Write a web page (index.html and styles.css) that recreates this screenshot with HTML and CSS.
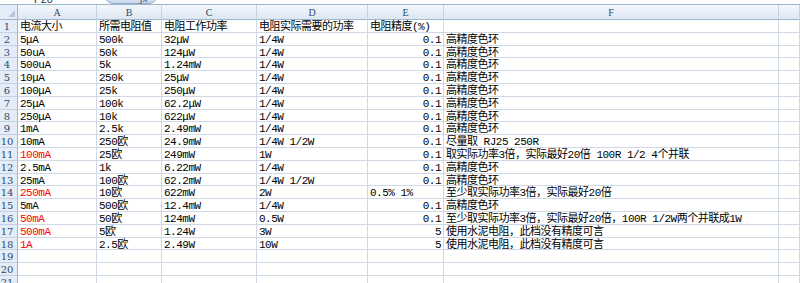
FILE: index.html
```html
<!DOCTYPE html>
<html>
<head>
    <title>电阻选择表</title>
    <link rel="stylesheet" href="styles.css">
</head>
<body>
    <div class="formula">
        <span class="namebox">F20</span>
        <span class="fxbtn">fx</span>
    </div>
    <div class="sheet">
        <div class="row head">
            <div class="corner"><i></i></div>
            <div>A</div><div>B</div><div>C</div><div>D</div><div>E</div><div>F</div><div></div>
        </div>
        <div class="row">
            <div class="num">1</div>
            <div>电流大小</div><div>所需电阻值</div><div>电阻工作功率</div><div>电阻实际需要的功率</div><div>电阻精度(%)</div><div></div><div></div>
        </div>
        <div class="row">
            <div class="num">2</div>
            <div>5μA</div><div>500k</div><div>32μW</div><div>1/4W</div><div class="r">0.1</div><div>高精度色环</div><div></div>
        </div>
        <div class="row">
            <div class="num">3</div>
            <div>50uA</div><div>50k</div><div>124μW</div><div>1/4W</div><div class="r">0.1</div><div>高精度色环</div><div></div>
        </div>
        <div class="row">
            <div class="num">4</div>
            <div>500uA</div><div>5k</div><div>1.24mW</div><div>1/4W</div><div class="r">0.1</div><div>高精度色环</div><div></div>
        </div>
        <div class="row">
            <div class="num">5</div>
            <div>10μA</div><div>250k</div><div>25μW</div><div>1/4W</div><div class="r">0.1</div><div>高精度色环</div><div></div>
        </div>
        <div class="row">
            <div class="num">6</div>
            <div>100μA</div><div>25k</div><div>250μW</div><div>1/4W</div><div class="r">0.1</div><div>高精度色环</div><div></div>
        </div>
        <div class="row">
            <div class="num">7</div>
            <div>25μA</div><div>100k</div><div>62.2μW</div><div>1/4W</div><div class="r">0.1</div><div>高精度色环</div><div></div>
        </div>
        <div class="row">
            <div class="num">8</div>
            <div>250μA</div><div>10k</div><div>622μW</div><div>1/4W</div><div class="r">0.1</div><div>高精度色环</div><div></div>
        </div>
        <div class="row">
            <div class="num">9</div>
            <div>1mA</div><div>2.5k</div><div>2.49mW</div><div>1/4W</div><div class="r">0.1</div><div>高精度色环</div><div></div>
        </div>
        <div class="row">
            <div class="num">10</div>
            <div>10mA</div><div>250欧</div><div>24.9mW</div><div>1/4W 1/2W</div><div class="r">0.1</div><div>尽量取 RJ25 250R</div><div></div>
        </div>
        <div class="row">
            <div class="num">11</div>
            <div class="red">100mA</div><div>25欧</div><div>249mW</div><div>1W</div><div class="r">0.1</div><div>取实际功率3倍，实际最好20倍 100R 1/2 4个并联</div><div></div>
        </div>
        <div class="row">
            <div class="num">12</div>
            <div>2.5mA</div><div>1k</div><div>6.22mW</div><div>1/4W</div><div class="r">0.1</div><div>高精度色环</div><div></div>
        </div>
        <div class="row">
            <div class="num">13</div>
            <div>25mA</div><div>100欧</div><div>62.2mW</div><div>1/4W 1/2W</div><div class="r">0.1</div><div>高精度色环</div><div></div>
        </div>
        <div class="row">
            <div class="num">14</div>
            <div class="red">250mA</div><div>10欧</div><div>622mW</div><div>2W</div><div>0.5% 1%</div><div>至少取实际功率3倍，实际最好20倍</div><div></div>
        </div>
        <div class="row">
            <div class="num">15</div>
            <div>5mA</div><div>500欧</div><div>12.4mW</div><div>1/4W</div><div class="r">0.1</div><div>高精度色环</div><div></div>
        </div>
        <div class="row">
            <div class="num">16</div>
            <div class="red">50mA</div><div>50欧</div><div>124mW</div><div>0.5W</div><div class="r">0.1</div><div>至少取实际功率3倍，实际最好20倍，100R 1/2W两个并联成1W</div><div></div>
        </div>
        <div class="row">
            <div class="num">17</div>
            <div class="red">500mA</div><div>5欧</div><div>1.24W</div><div>3W</div><div class="r">5</div><div>使用水泥电阻，此档没有精度可言</div><div></div>
        </div>
        <div class="row">
            <div class="num">18</div>
            <div class="red">1A</div><div>2.5欧</div><div>2.49W</div><div>10W</div><div class="r">5</div><div>使用水泥电阻，此档没有精度可言</div><div></div>
        </div>
        <div class="row">
            <div class="num">19</div>
            <div></div><div></div><div></div><div></div><div></div><div></div><div></div>
        </div>
        <div class="row">
            <div class="num">20</div>
            <div></div><div></div><div></div><div></div><div></div><div></div><div></div>
        </div>
        <div class="row">
            <div class="num">21</div>
            <div></div><div></div><div></div><div></div><div></div><div></div><div></div>
        </div>
    </div>
</body>
</html>
```

FILE: styles.css
```css
body {
    margin: 0;
    height: 283px;
    overflow: hidden;
    background-color: #ffffff;
}

/* Formula bar remains at the top */
.formula {
    display: flex;
    align-items: flex-end;
    height: 4px;
    overflow: hidden;
    background-color: #ffffff;
}
.namebox {
    margin-left: 34px;
    font-family: "Liberation Sans", sans-serif;
    font-size: 11px;
    line-height: 11px;
    margin-bottom: -1px;
    color: #333333;
}
.fxbtn {
    margin-left: 52px;
    width: 52px;
    height: 12px;
    box-sizing: border-box;
    padding-right: 8px;
    text-align: right;
    font-family: "Liberation Serif", serif;
    font-style: italic;
    font-size: 11px;
    line-height: 10px;
    color: #3c4f66;
    border: 1px solid #8fa9c9;
    border-radius: 0 0 8px 8px;
    background: linear-gradient(#f2f6fb, #c9d8ec);
}

/* Sheet grid */
.sheet {
    display: grid;
    grid-template-columns: 18px 79px 65px 95px 111px 76px 335px 1fr;
    grid-template-rows: 15px repeat(21, 12.8px);
    border-top: 1px solid #9eb6ce;
    font-family: "Liberation Mono", "Noto Sans CJK SC", monospace;
    font-size: 11px;
    letter-spacing: -0.5px;
    color: #000000;
}
.row {
    display: contents;
}
.row > div {
    box-sizing: border-box;
    border-right: 1px solid #d0d7e5;
    border-bottom: 1px solid #d0d7e5;
    padding: 1px 2px 0;
    line-height: 12px;
    white-space: nowrap;
    overflow: visible;
}
.row > div.r {
    text-align: right;
}
.row > div.red {
    color: #ff0000;
}

/* Column headers */
.head > div {
    background: linear-gradient(#f3f7fc, #dde7f3);
    border-right-color: #c5d3e4;
    border-bottom-color: #9eb6ce;
    padding: 0;
    text-align: center;
    font-family: "Liberation Serif", serif;
    font-size: 10px;
    line-height: 15px;
    color: #2f4a6c;
    letter-spacing: 0;
}
.head > div.corner {
    display: flex;
    justify-content: flex-end;
    align-items: flex-end;
    padding: 0 2px 2px 0;
    background: #e4ecf7;
    border-right-color: #9eb6ce;
}
.corner i {
    width: 0;
    height: 0;
    border-left: 7px solid transparent;
    border-bottom: 7px solid #b9c9dd;
}

/* Row numbers */
.row > div.num {
    background-color: #e4ecf7;
    border-right-color: #9eb6ce;
    border-bottom-color: #c3d1e3;
    padding: 1px 3px 0 0;
    text-align: center;
    font-family: "DejaVu Serif", serif;
    font-size: 10px;
    letter-spacing: 0;
    color: #2f4a6c;
}
```
